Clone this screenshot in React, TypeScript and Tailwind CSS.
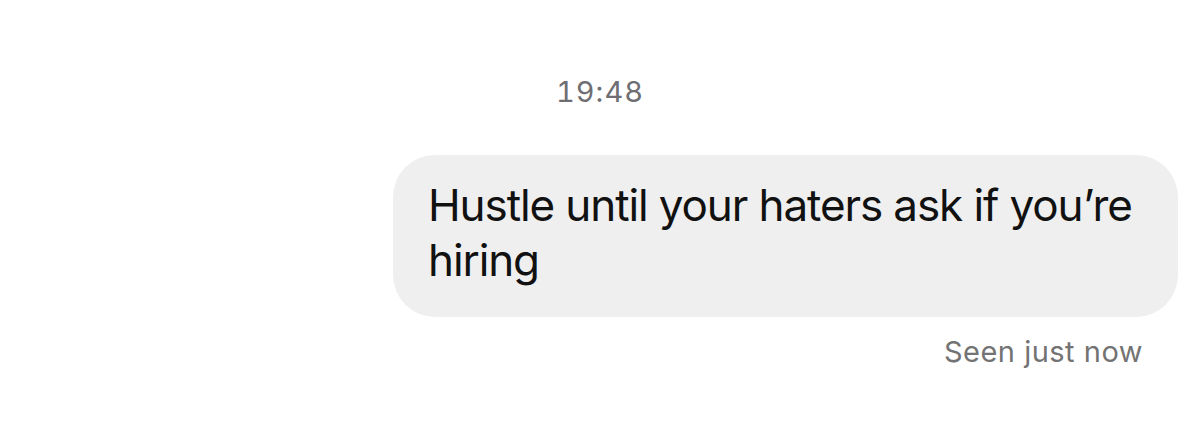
export default function App() {
  return (
    <div className="flex h-[430px] w-[1200px] flex-col bg-white font-['Inter',sans-serif]">
      <div className="mt-[74px] text-center text-[29px] leading-[36px] tracking-[1px] tabular-nums text-[#6e6e73]">
        19:48
      </div>
      <div className="mt-[45px] flex justify-end pr-[22px]">
        <div className="w-[785px] rounded-[42px] bg-[#efefef] pb-[29px] pl-[35px] pr-[35px] pt-[23px] text-[44px] leading-[55px] tracking-[-1.1px] text-[#111]">
          Hustle until your haters ask if you’re hiring
        </div>
      </div>
      <div className="mt-[17px] flex justify-end pr-[57px] text-[29px] leading-[36px] tracking-[0.5px] text-[#737373]">
        Seen just now
      </div>
    </div>
  );
}
